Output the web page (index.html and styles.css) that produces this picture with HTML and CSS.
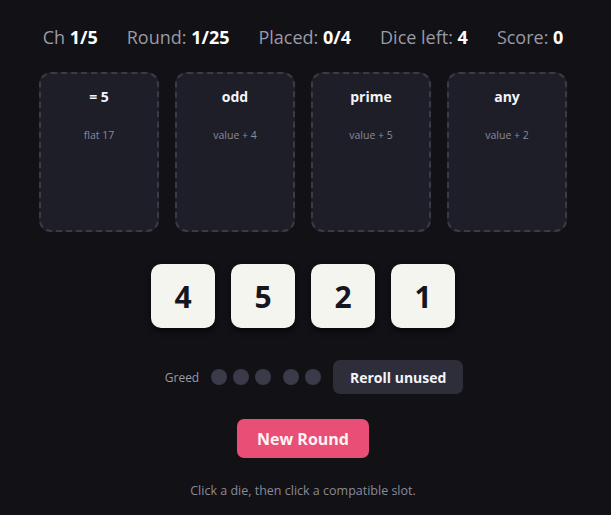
FILE: index.html
```
<!DOCTYPE html>
<html>
<head>
<meta charset="utf-8">
<link rel="stylesheet" href="styles.css">
</head>
<body>
<div class="app">
  <div class="stats">
    <span>Ch <b>1/5</b></span>
    <span>Round: <b>1/25</b></span>
    <span>Placed: <b>0/4</b></span>
    <span>Dice left: <b>4</b></span>
    <span>Score: <b>0</b></span>
  </div>
  <div class="slots">
    <div class="slot"><div class="slot-title">= 5</div><div class="slot-sub">flat 17</div></div>
    <div class="slot"><div class="slot-title">odd</div><div class="slot-sub">value + 4</div></div>
    <div class="slot"><div class="slot-title">prime</div><div class="slot-sub">value + 5</div></div>
    <div class="slot"><div class="slot-title">any</div><div class="slot-sub">value + 2</div></div>
  </div>
  <div class="dice">
    <div class="die">4</div>
    <div class="die">5</div>
    <div class="die">2</div>
    <div class="die">1</div>
  </div>
  <div class="greed-row">
    <span class="greed-label">Greed</span>
    <div class="dots">
      <span class="dot"></span><span class="dot"></span><span class="dot"></span>
      <span class="dot gap"></span><span class="dot"></span>
    </div>
    <button class="reroll">Reroll unused</button>
  </div>
  <button class="new-round">New Round</button>
  <div class="hint">Click a die, then click a compatible slot.</div>
</div>
</body>
</html>
```
FILE: styles.css
```
html, body {
  margin: 0;
  padding: 0;
  background: #111116;
}
body {
  font-family: "Open Sans", "Noto Sans", sans-serif;
  color: #f0f0f5;
}
.app {
  width: 606px;
  display: flex;
  flex-direction: column;
  align-items: center;
}
.stats {
  margin-top: 25px;
  display: flex;
  gap: 29px;
  font-size: 18px;
  line-height: 24px;
  color: #9a9aa6;
}
.stats b {
  color: #ffffff;
  font-weight: 700;
}
.slots {
  margin-top: 23px;
  display: flex;
  gap: 16px;
}
.slot {
  width: 120px;
  height: 160px;
  box-sizing: border-box;
  border: 2px dashed #3b3b48;
  border-radius: 12px;
  background: #1e1e28;
  display: flex;
  flex-direction: column;
  align-items: center;
}
.slot-title {
  margin-top: 13px;
  font-size: 14px;
  font-weight: 700;
  line-height: 20px;
  color: #f4f4fa;
}
.slot-sub {
  margin-top: 21px;
  font-size: 10.5px;
  line-height: 14px;
  color: #8a8a98;
}
.dice {
  margin-top: 32px;
  display: flex;
  gap: 16px;
}
.die {
  width: 64px;
  height: 64px;
  border-radius: 10px;
  background: #f4f5ef;
  color: #161620;
  font-size: 30px;
  font-weight: 700;
  display: flex;
  align-items: center;
  justify-content: center;
  box-shadow: 0 3px 6px rgba(0,0,0,0.6);
}
.greed-row {
  margin-top: 32px;
  display: flex;
  align-items: center;
  padding-left: 22px;
}
.greed-label {
  font-size: 12px;
  color: #9a9aa6;
  margin-right: 12px;
}
.dots {
  display: flex;
  gap: 6px;
}
.dot {
  width: 16px;
  height: 16px;
  border-radius: 50%;
  background: #3a3a48;
}
.dot.gap {
  margin-left: 6px;
}
.reroll {
  margin-left: 12px;
  width: 130px;
  height: 34px;
  border: none;
  border-radius: 7px;
  background: #2e2e3a;
  color: #f4f4fa;
  font-family: inherit;
  font-size: 14px;
  font-weight: 700;
}
.new-round {
  margin-top: 25px;
  width: 132px;
  height: 39px;
  border: none;
  border-radius: 7px;
  background: #e94f76;
  color: #fff3f3;
  font-family: inherit;
  font-size: 16px;
  font-weight: 700;
}
.hint {
  margin-top: 24px;
  font-size: 12.5px;
  color: #8a8a98;
}
```
